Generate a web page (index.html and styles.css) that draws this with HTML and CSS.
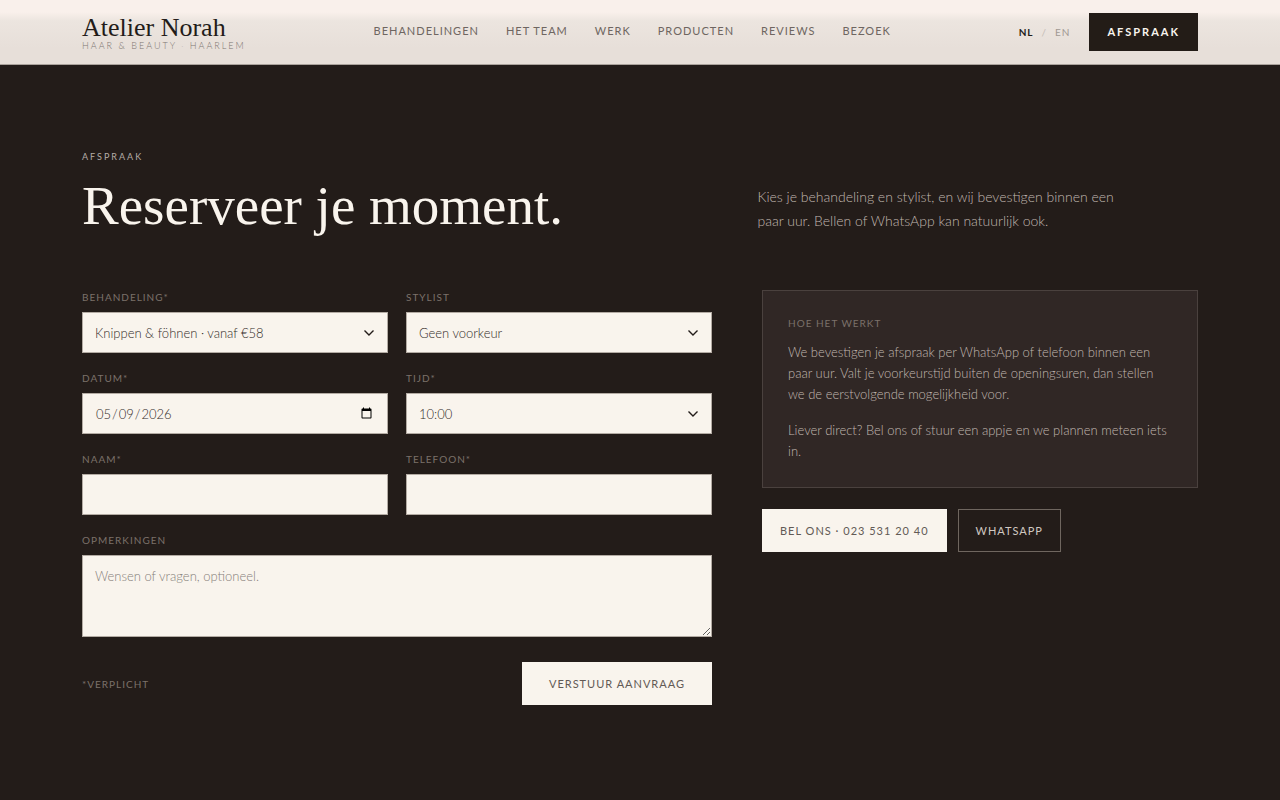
FILE: index.html
```html
<!DOCTYPE html>
<html lang="nl">
    <head>
        <meta charset="utf-8">
        <meta name="viewport" content="width=device-width, initial-scale=1">
        <title>Atelier Norah</title>

        <link rel="stylesheet" href="styles.css">
    </head>

    <body>
        <header class="site-header">
            <div class="wrap header-inner">
                <a href="#" class="brand">
                    <span class="brand-name">Atelier Norah</span>
                    <span class="brand-sub">Haar &amp; Beauty <span class="dot">·</span> Haarlem</span>
                </a>

                <nav class="nav">
                    <a href="#behandelingen">Behandelingen</a>
                    <a href="#team">Het team</a>
                    <a href="#werk">Werk</a>
                    <a href="#producten">Producten</a>
                    <a href="#reviews">Reviews</a>
                    <a href="#bezoek">Bezoek</a>
                </nav>

                <div class="header-right">
                    <div class="lang">
                        <button type="button" class="active">NL</button>
                        <span class="slash">/</span>
                        <button type="button">EN</button>
                    </div>
                    <a href="#afspraak" class="btn-dark">Afspraak</a>
                </div>
            </div>
        </header>

        <main class="wrap booking" id="afspraak">
            <p class="eyebrow">Afspraak</p>

            <div class="head">
                <h1>Reserveer je moment.</h1>
                <p class="lead">Kies je behandeling en stylist, en wij bevestigen binnen een paar uur. Bellen of WhatsApp kan natuurlijk ook.</p>
            </div>

            <div class="columns">
                <form class="form">
                    <div class="field">
                        <label for="behandeling">Behandeling*</label>
                        <select id="behandeling" name="behandeling">
                            <option>Knippen &amp; föhnen · vanaf €58</option>
                        </select>
                    </div>
                    <div class="field">
                        <label for="stylist">Stylist</label>
                        <select id="stylist" name="stylist">
                            <option>Geen voorkeur</option>
                        </select>
                    </div>
                    <div class="field">
                        <label for="datum">Datum*</label>
                        <input type="date" id="datum" name="datum" value="2026-05-09">
                    </div>
                    <div class="field">
                        <label for="tijd">Tijd*</label>
                        <select id="tijd" name="tijd">
                            <option>10:00</option>
                        </select>
                    </div>
                    <div class="field">
                        <label for="naam">Naam*</label>
                        <input type="text" id="naam" name="naam">
                    </div>
                    <div class="field">
                        <label for="telefoon">Telefoon*</label>
                        <input type="tel" id="telefoon" name="telefoon">
                    </div>
                    <div class="field full">
                        <label for="opmerkingen">Opmerkingen</label>
                        <textarea id="opmerkingen" name="opmerkingen" placeholder="Wensen of vragen, optioneel."></textarea>
                    </div>
                    <div class="form-foot full">
                        <span class="required">*Verplicht</span>
                        <button type="submit" class="btn btn-submit">Verstuur aanvraag</button>
                    </div>
                </form>

                <aside>
                    <div class="card">
                        <h2>Hoe het werkt</h2>
                        <p>We bevestigen je afspraak per WhatsApp of telefoon binnen een paar uur. Valt je voorkeurstijd buiten de openingsuren, dan stellen we de eerstvolgende mogelijkheid voor.</p>
                        <p>Liever direct? Bel ons of stuur een appje en we plannen meteen iets in.</p>
                    </div>
                    <div class="actions">
                        <a href="tel:0235312040" class="btn">Bel ons · 023 531 20 40</a>
                        <a href="#whatsapp" class="btn btn-outline">WhatsApp</a>
                    </div>
                </aside>
            </div>
        </main>
    </body>
</html>
```

FILE: styles.css
```css
* {
    box-sizing: border-box;
}

body {
    margin: 0;
    min-height: 100vh;
    background: #231c19;
    color: #f9f4ed;
    font-family: Lato, "Liberation Sans", sans-serif;
    font-weight: 300;
    font-size: 14px;
}

a {
    color: inherit;
    text-decoration: none;
}

h1, h2, p {
    margin: 0;
    font-weight: 300;
}

.wrap {
    width: calc(100% - 48px);
    max-width: 1116px;
    margin: 0 auto;
}

/* header */

.site-header {
    background: linear-gradient(#f9f0eb 12px, #ece5df 21px, #e7dfd9 48px);
    border-bottom: 1px solid #aaa29c;
    color: #231c19;
}

.header-inner {
    display: flex;
    align-items: center;
    justify-content: space-between;
    min-height: 64px;
}

.brand {
    display: flex;
    flex-direction: column;
}

.brand-name {
    font-family: "Liberation Serif", serif;
    font-size: 26px;
    line-height: 27px;
    font-weight: 400;
}

.brand-sub {
    font-size: 9px;
    line-height: 10px;
    letter-spacing: 2px;
    text-transform: uppercase;
    color: #7d7671;
}

.dot {
    opacity: .3;
}

.nav {
    display: flex;
    gap: 27px;
    padding-bottom: 3px;
    font-size: 11px;
    font-weight: 400;
    letter-spacing: 1px;
    text-transform: uppercase;
    color: #6e6661;
}

.header-right {
    display: flex;
    align-items: center;
    gap: 19px;
}

.lang {
    display: flex;
    gap: 8px;
    font-size: 10px;
    font-weight: 400;
    letter-spacing: 1px;
    color: #a19993;
}

.lang button {
    padding: 0;
    border: none;
    background: none;
    font: inherit;
    letter-spacing: inherit;
    color: inherit;
    cursor: pointer;
}

.lang .active {
    color: #231c19;
    font-weight: 700;
}

.slash {
    color: #c4bcb6;
}

.btn-dark {
    padding: 12px 18px;
    background: #231c17;
    color: #f9f4ed;
    font-size: 11px;
    line-height: 14px;
    font-weight: 700;
    letter-spacing: 2px;
    text-transform: uppercase;
}

/* booking */

.booking {
    padding: 85px 0;
}

.eyebrow {
    font-size: 9px;
    line-height: 14px;
    font-weight: 400;
    letter-spacing: 2px;
    text-transform: uppercase;
    color: #b5ada7;
}

.head {
    display: grid;
    grid-template-columns: 1.42fr 1fr;
    gap: 50px;
    align-items: center;
    margin: 14px 0 50px;
}

.head h1 {
    padding-bottom: 6px;
    font-family: "Liberation Serif", serif;
    font-size: 55px;
    line-height: 56px;
    font-weight: 400;
}

.lead {
    max-width: 370px;
    font-size: 14px;
    line-height: 24px;
    color: #c0b7b0;
}

.columns {
    display: grid;
    grid-template-columns: 1.445fr 1fr;
    gap: 50px;
}

.form {
    display: grid;
    grid-template-columns: 1fr 1fr;
    gap: 18px;
    align-content: start;
}

.full {
    grid-column: 1 / -1;
}

.field {
    display: flex;
    flex-direction: column;
    gap: 8px;
    min-width: 0;
}

.field label,
.required,
.card h2 {
    font-size: 10px;
    line-height: 14px;
    font-weight: 400;
    letter-spacing: 1px;
    text-transform: uppercase;
    color: #7b716a;
}

.field input,
.field select,
.field textarea {
    width: 100%;
    height: 41px;
    padding: 10px 12px;
    border: 1px solid #b3aba3;
    border-radius: 0;
    background-color: #f9f4ed;
    color: #332c28;
    font: inherit;
    font-size: 13px;
}

.field select {
    appearance: none;
    background-image: url("data:image/svg+xml,%3Csvg xmlns='http://www.w3.org/2000/svg' width='12' height='8' viewBox='0 0 12 8'%3E%3Cpath d='M1.5 1.5 6 6l4.500-4.500' fill='none' stroke='%23231c19' stroke-width='1.400'/%3E%3C/svg%3E");
    background-repeat: no-repeat;
    background-position: right 12px center;
}

.field textarea {
    display: block;
    height: 82px;
    padding: 12px;
    resize: vertical;
}

.field textarea::placeholder {
    color: #86807a;
}

.form-foot {
    display: flex;
    align-items: center;
    justify-content: space-between;
    padding-top: 7px;
}

.btn {
    display: inline-block;
    padding: 14px 17px 13px;
    border: 1px solid #f9f4ed;
    border-radius: 0;
    background: #f9f4ed;
    color: #625a55;
    font-family: inherit;
    font-size: 11px;
    line-height: 14px;
    font-weight: 400;
    letter-spacing: 1px;
    text-transform: uppercase;
}

.btn-submit {
    padding: 14px 26px 13px;
    cursor: pointer;
}

.btn-outline {
    border-color: #6f665f;
    background: none;
    color: #d0c8c1;
}

.card {
    padding: 25px;
    border: 1px solid #4a413e;
    background: #302725;
}

.card p {
    margin-top: 15px;
    font-size: 13px;
    line-height: 21px;
    color: #c0b7b0;
}

.card h2 + p {
    margin-top: 12px;
}

.actions {
    display: flex;
    flex-wrap: wrap;
    gap: 11px;
    margin-top: 21px;
}

@media (max-width: 1000px) {
    .nav {
        display: none;
    }

    .head,
    .columns {
        grid-template-columns: 1fr;
    }
}
```
